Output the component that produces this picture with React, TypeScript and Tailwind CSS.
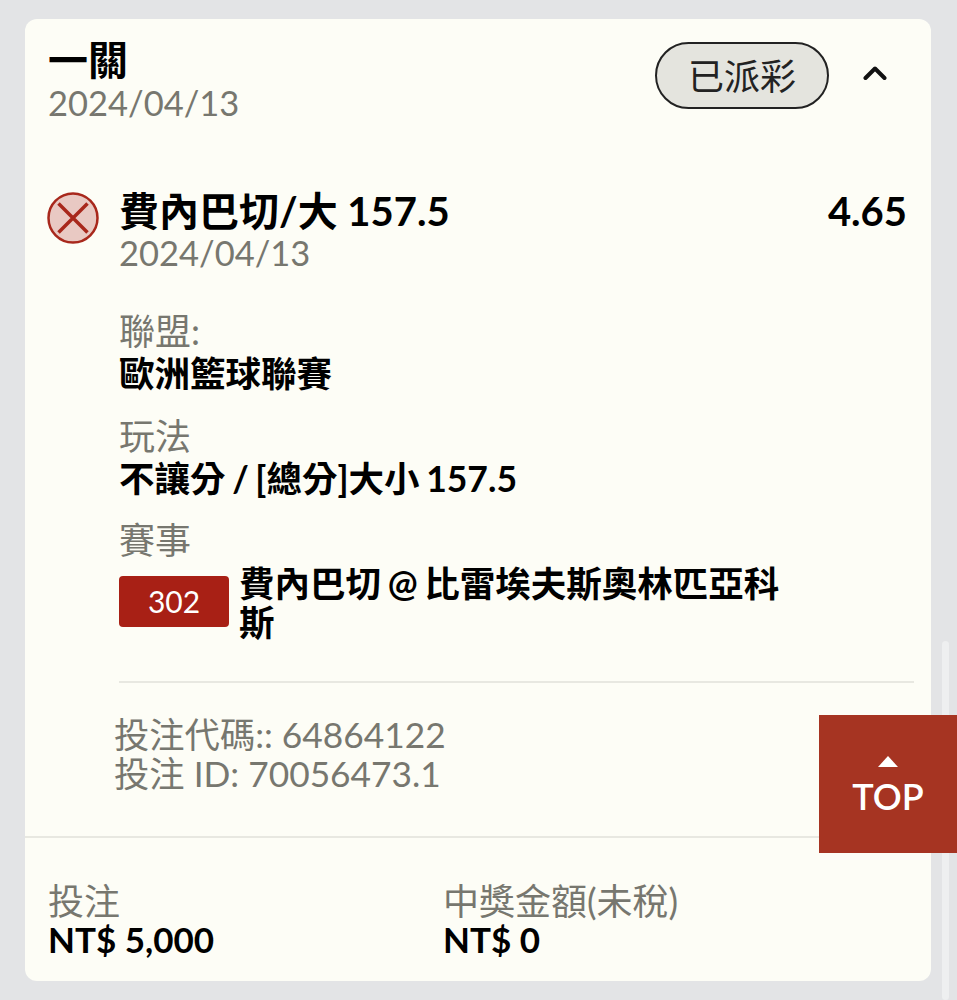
import React from "react";

const FONT = "font-['Lato','Noto_Sans_CJK_TC','Noto_Sans',sans-serif]";

function Field({ label, children, className = "" }: { label: string; children: React.ReactNode; className?: string }) {
  return (
    <div className={className}>
      <div className="text-[36px] leading-[36px] text-[#77776f]">{label}</div>
      <div className="mt-[7px] text-[35.5px] leading-[36px] font-bold text-black [word-spacing:-2px]">{children}</div>
    </div>
  );
}

export default function App() {
  return (
    <div className={`${FONT} relative h-[1000px] w-[957px] overflow-hidden bg-[#e3e4e6] pl-[25px] pt-[19px]`}>
      <div className="flex h-[962px] w-[906px] flex-col rounded-[12px] bg-[#fdfdf6]">
        <div className="flex items-start justify-between pl-[23px] pr-[36px] pt-[19px]">
          <div>
            <div className="text-[40px] leading-[44px] font-bold text-black">一關</div>
            <div className="text-[34.5px] leading-[42px] text-[#77776f]">2024/04/13</div>
          </div>
          <div className="flex items-center gap-[34px] pt-[4px]">
            <div className="flex h-[67px] w-[174px] items-center justify-center rounded-full border-2 border-[#222] bg-[#e4e4de] text-[36px] font-normal text-[#222]">
              已派彩
            </div>
            <svg width="24" height="16" viewBox="0 0 24 16" fill="none" className="mb-[6px] mr-[8px]">
              <path d="M2.5 13 12 3.5 21.5 13" stroke="#111" strokeWidth="4" strokeLinecap="round" strokeLinejoin="round" />
            </svg>
          </div>
        </div>

        <div className="flex items-start pl-[22px] pr-[24px] pt-[65px]">
          <svg width="52" height="52" viewBox="0 0 52 52" className="mt-[3px] shrink-0">
            <circle cx="26" cy="26" r="24.5" fill="#e9c9c3" stroke="#a8281c" strokeWidth="2.5" />
            <path d="M11.5 11.5 40.5 40.5M40.5 11.5 11.5 40.5" stroke="#a8281c" strokeWidth="3.5" />
          </svg>
          <div className="ml-[20px] min-w-0 flex-1">
            <div className="flex justify-between">
              <div className="text-[40px] leading-[44px] font-bold text-black">費內巴切/大 157.5</div>
              <div className="text-[40px] leading-[44px] font-bold text-black">4.65</div>
            </div>
            <div className="mt-[-1px] text-[34.5px] leading-[42px] text-[#77776f]">2024/04/13</div>
          </div>
        </div>

        <div className="pl-[94px] pr-[17px] pt-[39px]">
          <Field label="聯盟:">歐洲籃球聯賽</Field>
          <Field label="玩法" className="mt-[26px]">不讓分 / [總分]大小 157.5</Field>
          <div className="mt-[25px] text-[36px] leading-[36px] text-[#77776f]">賽事</div>
          <div className="mt-[6px] flex items-start">
            <div className="mt-[12px] flex h-[51px] w-[110px] shrink-0 items-center justify-center rounded-[4px] bg-[#a82015] text-[30px] text-white">
              302
            </div>
            <div className="ml-[10px] w-[546px] text-[35.5px] leading-[39px] font-bold text-black [word-spacing:-2px]">
              費內巴切 @ 比雷埃夫斯奧林匹亞科斯
            </div>
          </div>
          <div className="mt-[39px] h-[2px] bg-[#e8e8e1]" />
        </div>

        <div className="pl-[89px] pt-[33px] text-[35.3px] leading-[38.5px] text-[#77776f]">
          <div>投注代碼:: 64864122</div>
          <div>投注 ID: 70056473.1</div>
        </div>

        <div className="mt-[43px] h-[2px] bg-[#e8e8e1]" />

        <div className="flex pl-[23px] pt-[44px]">
          <div className="w-[395px]">
            <div className="text-[36px] leading-[38px] text-[#77776f]">投注</div>
            <div className="text-[35px] leading-[38px] font-bold text-black">NT$ 5,000</div>
          </div>
          <div>
            <div className="text-[36px] leading-[38px] text-[#77776f]">中獎金額(未稅)</div>
            <div className="text-[35px] leading-[38px] font-bold text-black">NT$ 0</div>
          </div>
        </div>
      </div>

      <div className="absolute right-[8px] top-[641px] h-[359px] w-[7px] rounded-full bg-[#eeeff0]" />

      <div className="absolute right-0 top-[715px] flex h-[138px] w-[138px] flex-col items-center bg-[#a63422] pt-[41px] text-white">
        <svg width="20" height="11" viewBox="0 0 20 11">
          <path d="M10 0 20 11H0Z" fill="#fff" />
        </svg>
        <div className="mt-[8px] text-[36px] leading-[42px] font-semibold">TOP</div>
      </div>
    </div>
  );
}
